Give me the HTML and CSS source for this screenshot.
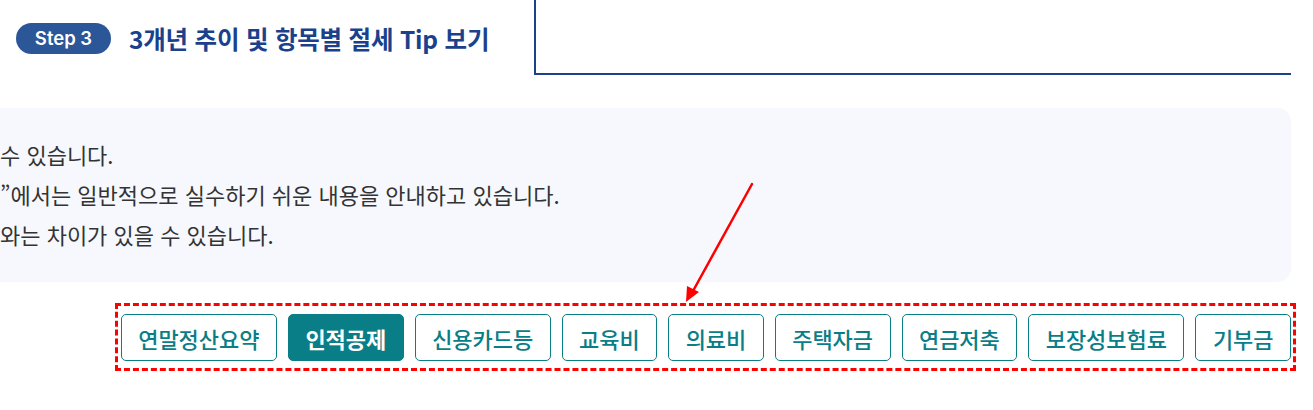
FILE: index.html
```html
<!DOCTYPE html>
<html lang="ko">
<head>
  <meta charset="UTF-8" />
  <title>3개년 추이 및 항목별 절세 Tip 보기</title>
  <link rel="stylesheet" href="styles.css">
</head>
<body>

  <header class="step-header">
    <div class="step-title">
      <span class="step-badge">Step 3</span>
      <h2>3개년 추이 및 항목별 절세 Tip 보기</h2>
    </div>
    <div class="step-box"></div>
  </header>

  <section class="notice">
    <p>수 있습니다.</p>
    <p>”에서는 일반적으로 실수하기 쉬운 내용을 안내하고 있습니다.</p>
    <p>와는 차이가 있을 수 있습니다.</p>
  </section>

  <nav class="tip-tabs">
    <button class="tab">연말정산요약</button>
    <button class="tab active">인적공제</button>
    <button class="tab">신용카드등</button>
    <button class="tab">교육비</button>
    <button class="tab">의료비</button>
    <button class="tab">주택자금</button>
    <button class="tab">연금저축</button>
    <button class="tab">보장성보험료</button>
    <button class="tab">기부금</button>
  </nav>

  <!-- annotation arrow -->
  <svg class="pointer" width="1313" height="410" viewBox="0 0 1313 410">
    <line x1="752" y1="184" x2="693" y2="291" stroke="#ff0000" stroke-width="2.5" stroke-linecap="round"/>
    <polygon points="686,302 687,286 699,292" fill="#ff0000"/>
  </svg>

</body>
</html>
```

FILE: styles.css
```css
/* ===== Variables ===== */
:root {
  --navy: hsl(216, 56%, 38%);
  --navy-dark: hsl(220, 68%, 33%);
  --teal: hsl(184, 88%, 28%);
  --panel-bg: hsl(228, 70%, 98%);
  --text: hsl(0, 0%, 20%);
  --mark: #ff0000;
}

/* Reset & Base */
*, *::before, *::after { box-sizing: border-box; margin: 0; padding: 0; }
body {
  font-family: "Noto Sans CJK KR", "Noto Sans", sans-serif;
  background: #fff;
  color: var(--text);
  width: 1313px;
  height: 410px;
  overflow: hidden;
  position: relative;
}

/* Header */
.step-header {
  display: flex;
  height: 75px;
}
.step-title {
  width: 534px;
  display: flex;
  align-items: center;
  padding-left: 16px;
  padding-top: 1px;
}
.step-badge {
  display: inline-flex;
  align-items: center;
  justify-content: center;
  width: 95px;
  height: 31px;
  border-radius: 16px;
  background: var(--navy);
  color: #fff;
  font-family: Inter, "Noto Sans", sans-serif;
  font-size: 18.5px;
  font-weight: 600;
}
.step-title h2 {
  margin-left: 18px;
  font-size: 24.5px;
  font-weight: 700;
  color: var(--navy-dark);
  letter-spacing: -0.2px;
}
.step-box {
  flex: 1;
  margin-right: 22px;
  border-left: 2px solid var(--navy-dark);
  border-bottom: 2px solid var(--navy-dark);
}

/* Notice panel */
.notice {
  margin: 33px 22px 0 -30px;
  height: 174px;
  padding: 26px 0 0 30px;
  background: var(--panel-bg);
  border-radius: 14px;
}
.notice p {
  font-size: 22px;
  line-height: 40px;
  white-space: nowrap;
}

/* Tabs */
.tip-tabs {
  display: flex;
  justify-content: flex-end;
  gap: 11px;
  margin: 21px 17px 0 115px;
  padding: 8px 2px 7px 3px;
  border: 3px dashed var(--mark);
}
.tab {
  flex: none;
  height: 47px;
  padding: 0 16.4px;
  border: 1px solid var(--teal);
  border-radius: 5px;
  background: #fff;
  color: var(--teal);
  font-family: inherit;
  font-size: 22px;
  font-weight: 500;
  white-space: nowrap;
  cursor: pointer;
}
.tab.active {
  background: var(--teal);
  color: #fff;
  font-weight: 700;
}

/* Annotation */
.pointer {
  position: absolute;
  top: 0;
  left: 0;
  pointer-events: none;
}
```
